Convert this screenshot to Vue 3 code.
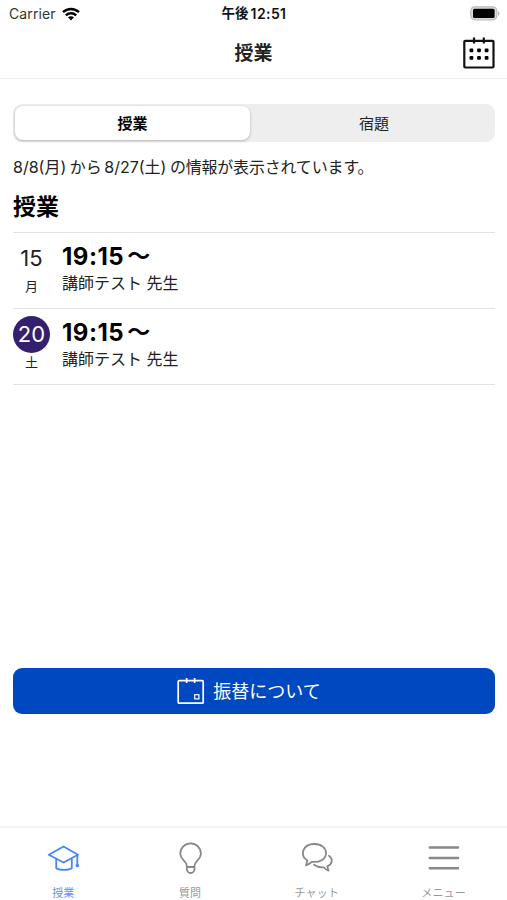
<script setup>
import { ref } from 'vue'

const segments = ['授業', '宿題']
const activeSegment = ref(0)

const lessons = ref([
    { id: 1, day: 15, weekday: '月', time: '19:15', teacher: '講師テスト 先生', today: false },
    { id: 2, day: 20, weekday: '土', time: '19:15', teacher: '講師テスト 先生', today: true },
])

const tabs = [
    { name: 'lesson', label: '授業' },
    { name: 'question', label: '質問' },
    { name: 'chat', label: 'チャット' },
    { name: 'menu', label: 'メニュー' },
]
const activeTab = ref('lesson')
</script>

<template>
    <div class="screen">
        <!-- Status bar -->
        <div class="status-bar">
            <div class="carrier">
                <span>Carrier</span>
                <svg class="wifi" viewBox="0 0 18 14">
                    <path d="M1 5.200C5.500 .9 12.500 .9 17 5.200M3.800 8.300C6.800 5.500 11.200 5.500 14.200 8.300" />
                    <path class="wifi-dot" d="M6 10.300C7.700 8.800 10.300 8.800 12 10.300L9 13.500Z" />
                </svg>
            </div>
            <div class="clock"><span>午後</span><span>12:51</span></div>
            <svg class="battery" viewBox="0 0 31 15">
                <rect class="battery-shell" x="1.800" y="0.800" width="26" height="13" rx="4" />
                <rect x="4" y="2.700" width="21.600" height="9.200" rx="1.500" />
                <path class="battery-tip" d="M29 5C31 6 31 9 29 10Z" />
            </svg>
        </div>
        <!-- Header -->
        <header class="nav-bar">
            <h1>授業</h1>
            <button class="calendar-button" aria-label="calendar">
                <svg viewBox="0 0 32 32">
                    <rect class="line" x="1.300" y="3.800" width="29.200" height="26.700" rx="1" />
                    <path class="line" d="M11 0.500V6.500M20.800 0.500V6.500" />
                    <g>
                        <rect v-for="n in 6" :key="n" :x="6.500 + ((n - 1) % 3) * 7.600" :y="n > 3 ? 19 : 11.500" width="3.800" height="3.800" rx="1" />
                    </g>
                </svg>
            </button>
        </header>
        <main class="content">
            <div class="segments">
                <button
                    v-for="(label, i) in segments"
                    :key="label"
                    :class="{ active: activeSegment === i }"
                    v-on:click="activeSegment = i"
                >{{ label }}</button>
            </div>
            <p class="period"><span>8/8(月)</span><span>から</span><span>8/27(土)</span><span class="rest">の情報が表示されています。</span></p>
            <h2>授業</h2>
            <!-- Lessons -->
            <ul class="lessons">
                <li v-for="lesson in lessons" :key="lesson.id">
                    <div class="date">
                        <span class="day" :class="{ today: lesson.today }">{{ lesson.day }}</span>
                        <span class="weekday">{{ lesson.weekday }}</span>
                    </div>
                    <div class="info">
                        <span class="time">{{ lesson.time }}<span class="wave">〜</span></span>
                        <span class="teacher">{{ lesson.teacher }}</span>
                    </div>
                </li>
            </ul>
            <button class="transfer">
                <svg viewBox="0 0 28 28">
                    <rect x="1.200" y="3.700" width="25" height="22.500" rx="1" />
                    <path d="M9.600 1V6M17.600 1V6" />
                    <rect class="small" x="17.700" y="17.700" width="4.200" height="4.200" />
                </svg>
                <span>振替について</span>
            </button>
        </main>
        <!-- Tab bar -->
        <nav class="tab-bar">
            <button
                v-for="tab in tabs"
                :key="tab.name"
                :class="{ active: activeTab === tab.name }"
                v-on:click="activeTab = tab.name"
            >
                <svg viewBox="0 0 32 32">
                    <g v-if="tab.name === 'lesson'">
                        <path d="M1.800 12.800L16.500 4.500L31 12.800L16.500 20.500Z" />
                        <path d="M9.200 17V26C12 28.500 22 28.500 24.800 26V17" />
                        <path d="M30.300 13.500V23" />
                        <circle class="tassel" cx="30.300" cy="23.500" r="0.900" />
                    </g>
                    <g v-else-if="tab.name === 'question'">
                        <path d="M12.800 24C12.800 18.500 6.300 18 6.300 11.700A10.300 10.300 0 0 1 26.900 11.700C26.900 18 20.500 18.500 20.500 24V27A3.850 4 0 0 1 12.800 27ZM12.800 25H20.500" />
                    </g>
                    <g v-else-if="tab.name === 'chat'">
                        <path d="M5 23.500L6.400 18.500C-1.500 13.500 1.500 2 13.200 2C20.500 2 25 6 25 11C25 17 19.500 20.500 10.800 19.900C8.800 21.500 7.200 22.900 5 23.500Z" />
                        <path d="M28 13.800C32.600 17.500 31 22.300 26.300 24.300L27.500 28.700C25.200 28 24 26.600 22.800 25.300C18.500 25.600 15.500 24.600 13 22.800" />
                    </g>
                    <path v-else class="bars" d="M1.800 5.500H30M1.800 15.900H30M1.800 26.300H30" />
                </svg>
                <span>{{ tab.label }}</span>
            </button>
        </nav>
    </div>
</template>

<style>
body {
    background: #fff;
}
</style>

<style scoped>
.screen {
    display: flex;
    flex-direction: column;
    height: 900px;
    overflow: hidden;
    background: #fff;
    color: #222;
    font-family: Inter, "Noto Sans CJK JP", sans-serif;
}

button {
    padding: 0;
    border: 0;
    background: none;
    color: inherit;
    font-family: inherit;
    cursor: pointer;
}

.status-bar {
    display: grid;
    grid-template-columns: 1fr auto 1fr;
    align-items: center;
    height: 27px;
    padding: 0 7px 0 9px;
    box-sizing: border-box;
    font-size: 14px;
    line-height: 27px;
}

.carrier {
    display: flex;
    align-items: center;
    gap: 6px;
    color: #333;
    letter-spacing: 0.1px;
}

.wifi {
    width: 18px;
    height: 14px;
    fill: none;
    stroke: #000;
    stroke-width: 2.4;
}

.wifi .wifi-dot {
    fill: #000;
    stroke: none;
}

.clock {
    display: flex;
    gap: 2px;
    margin-right: 1px;
    color: #111;
    font-size: 14px;
    font-weight: 600;
    letter-spacing: 0.4px;
}

.clock span:first-child {
    font-size: 13.5px;
    letter-spacing: 0;
}

.battery {
    justify-self: end;
    width: 31px;
    height: 15px;
}

.battery-shell {
    fill: #ddd;
    stroke: #bbb;
    stroke-width: 1.2;
}

.battery-tip {
    fill: #bbb;
}

.nav-bar {
    display: grid;
    grid-template-columns: 1fr auto 1fr;
    align-items: center;
    height: 52px;
    padding: 0 12px;
    border-bottom: 1px solid #f2f2f2;
    box-sizing: border-box;
}

.nav-bar h1 {
    grid-column: 2;
    margin: 0;
    padding-top: 2px;
    font-size: 19px;
    font-weight: 600;
    line-height: 28px;
}

.calendar-button {
    justify-self: end;
    height: 32px;
}

.calendar-button svg {
    display: block;
    width: 32px;
    height: 32px;
}

.line {
    fill: none;
    stroke: #111;
    stroke-width: 2.2;
}

.content {
    display: flex;
    flex: 1;
    flex-direction: column;
    padding: 25px 12px 0 13px;
}

.segments {
    display: grid;
    grid-template-columns: 235px 1fr;
    gap: 5px;
    height: 38px;
    padding: 2px;
    border-radius: 9px;
    background: #eee;
    box-sizing: border-box;
}

.segments button {
    padding-top: 1px;
    border-radius: 8px;
    color: #222;
    font-size: 15px;
    line-height: 33px;
}

.segments button.active {
    background: #fff;
    box-shadow: 0 1px 3px rgba(0, 0, 0, 0.25);
    color: #000;
    font-weight: 600;
}

.period {
    display: flex;
    margin: 12px 0 0;
    font-size: 16px;
    line-height: 26px;
    white-space: nowrap;
}

.period span + span {
    margin-left: 3.5px;
}

.period span:nth-child(3) {
    margin-left: 2.5px;
}

.period .rest {
    letter-spacing: -0.2px;
}

h2 {
    margin: 9px 0 0;
    color: #000;
    font-size: 23px;
    font-weight: 600;
    line-height: 36px;
}

.lessons {
    margin: 7px 0 0;
    padding: 0;
    border-top: 1px solid #e2e2e2;
    list-style: none;
}

.lessons li {
    display: flex;
    gap: 12px;
    height: 76px;
    padding-top: 7px;
    border-bottom: 1px solid #e2e2e2;
    box-sizing: border-box;
}

.date {
    display: flex;
    flex-direction: column;
    align-items: center;
    width: 37px;
}

.day {
    width: 37px;
    height: 37px;
    border-radius: 50%;
    font-size: 22px;
    line-height: 36px;
    text-align: center;
}

.day.today {
    background: #352070;
    color: #fff;
}

.weekday {
    font-size: 13px;
    line-height: 18px;
}

.info {
    display: flex;
    flex-direction: column;
}

.time {
    display: flex;
    gap: 3px;
    color: #000;
    font-size: 24px;
    font-weight: 700;
    letter-spacing: 0.5px;
    line-height: 33px;
}

.wave {
    font-size: 23px;
    font-weight: 600;
}

.teacher {
    font-size: 16px;
    line-height: 20px;
}

.transfer {
    display: flex;
    align-items: center;
    justify-content: center;
    gap: 8px;
    height: 46px;
    margin-top: 283px;
    padding-right: 10px;
    border-radius: 9px;
    background: #0048bf;
    color: #fff;
    font-size: 18px;
}

.transfer span {
    padding-bottom: 2px;
}

.transfer svg {
    width: 28px;
    height: 28px;
    fill: none;
    stroke: #fff;
    stroke-width: 1.7;
}

.transfer .small {
    stroke-width: 1.2;
}

.tab-bar {
    display: grid;
    grid-template-columns: repeat(4, 1fr);
    height: 74px;
    border-top: 2px solid #f3f3f3;
    box-sizing: border-box;
}

.tab-bar button {
    display: flex;
    flex-direction: column;
    align-items: center;
    padding-top: 14px;
    color: #999;
    font-size: 11px;
}

.tab-bar button.active {
    color: #5a96f5;
}

.tab-bar svg {
    width: 32px;
    height: 32px;
    fill: none;
    stroke: #888;
    stroke-width: 1.8;
    stroke-linejoin: round;
    stroke-linecap: round;
}

.tab-bar .active svg {
    stroke: #4388f5;
}

.tab-bar .bars {
    stroke-width: 2.5;
}

.tab-bar span {
    margin-top: 10px;
    letter-spacing: 0.2px;
    line-height: 18px;
}
</style>
